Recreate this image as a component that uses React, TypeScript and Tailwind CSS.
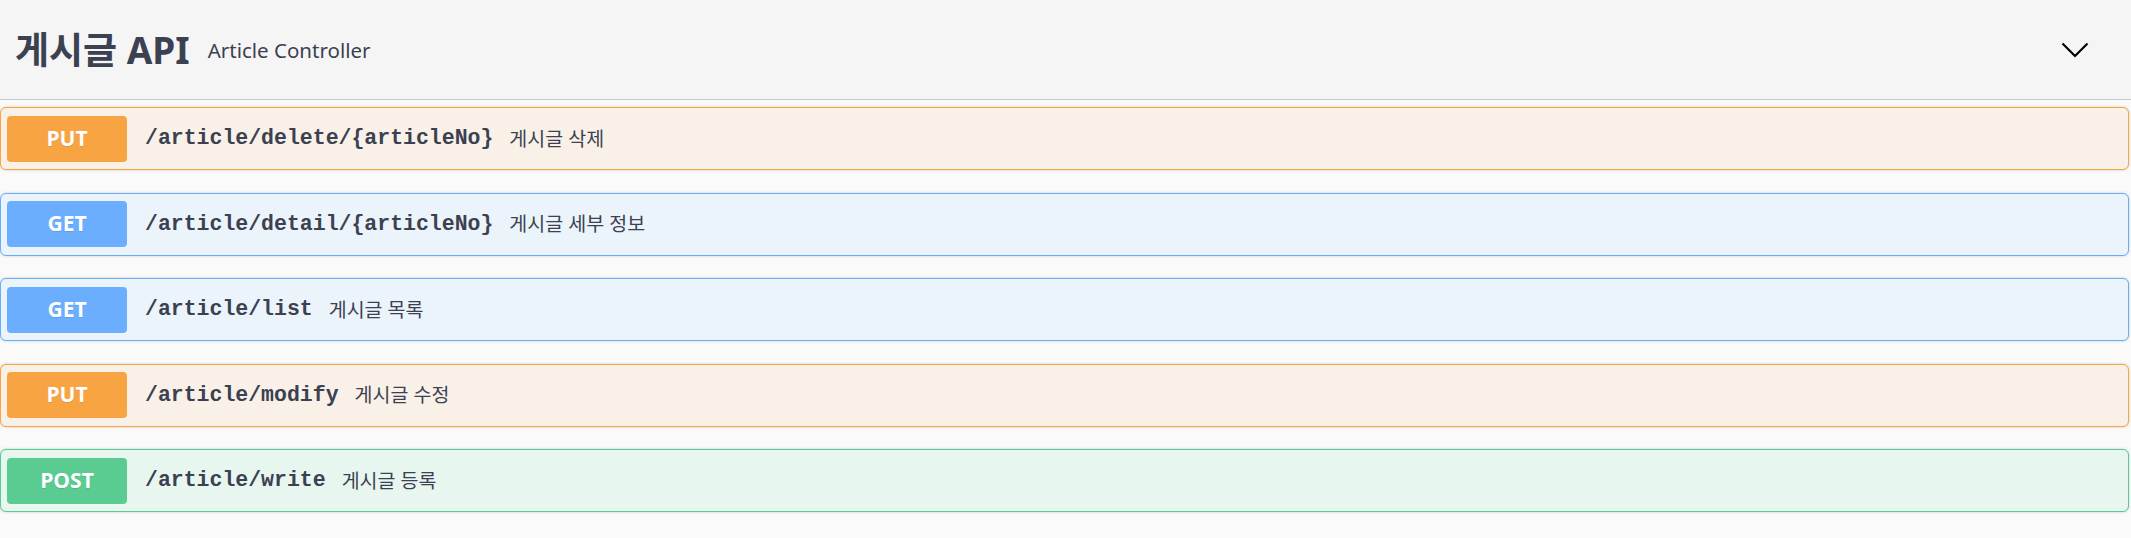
import React from "react";

type Op = {
  method: "PUT" | "GET" | "POST";
  path: string;
  summary: string;
};

const ops: Op[] = [
  { method: "PUT", path: "/article/delete/{articleNo}", summary: "게시글 삭제" },
  { method: "GET", path: "/article/detail/{articleNo}", summary: "게시글 세부 정보" },
  { method: "GET", path: "/article/list", summary: "게시글 목록" },
  { method: "PUT", path: "/article/modify", summary: "게시글 수정" },
  { method: "POST", path: "/article/write", summary: "게시글 등록" },
];

const styles = {
  PUT: {
    box: "border-[#f9a43f] bg-[#f9f0e7]",
    badge: "bg-[#f8a442]",
  },
  GET: {
    box: "border-[#68adfc] bg-[#ebf3fb]",
    badge: "bg-[#6aaefd]",
  },
  POST: {
    box: "border-[#58cb91] bg-[#e8f6f0]",
    badge: "bg-[#5acb91]",
  },
};

function OpBlock({ op }: { op: Op }) {
  const s = styles[op.method];
  return (
    <div
      className={`mr-[2px] flex h-[63px] items-center rounded-[6px] border pl-[6px] shadow-[0_0_3px_rgba(0,0,0,0.19)] ${s.box}`}
    >
      <span
        className={`flex h-[46px] w-[120px] shrink-0 items-center justify-center rounded-[4px] text-[21px] font-bold text-white [text-shadow:0_1px_0_rgba(0,0,0,0.1)] ${s.badge}`}
        style={{ fontFamily: '"Open Sans", "Noto Sans", sans-serif' }}
      >
        {op.method}
      </span>
      <span className="ml-[18px] font-['Liberation_Mono',monospace] text-[21.5px] font-bold text-[#3b4151]">
        {op.path}
      </span>
      <span className="ml-[16px] font-['Noto_Sans','Noto_Sans_CJK_KR',sans-serif] text-[19.5px] text-[#3b4151]">
        {op.summary}
      </span>
    </div>
  );
}

export default function App() {
  return (
    <div className="min-h-[538px] w-full bg-[#fafafa]">
      <div className="flex h-[100px] items-center border-b border-[#c8c9cc] bg-[#f5f5f5] pl-[15px] pr-[42px] text-[#3b4151]">
        <h3 className="font-['Noto_Sans','Noto_Sans_CJK_KR',sans-serif] text-[37px] font-bold">
          게시글 API
        </h3>
        <span className="ml-[18px] mt-[2px] font-['Noto_Sans','Noto_Sans_CJK_KR',sans-serif] text-[20.5px]">
          Article Controller
        </span>
        <div className="ml-auto">
          <svg width="28" height="16" viewBox="0 0 28 16" fill="none">
            <polyline
              points="1.5,1.5 14,14 26.5,1.5"
              stroke="#000"
              strokeWidth="2.2"
            />
          </svg>
        </div>
      </div>
      <div className="flex flex-col gap-[22.5px] pt-[7px]">
        {ops.map((op, i) => (
          <OpBlock key={i} op={op} />
        ))}
      </div>
    </div>
  );
}
